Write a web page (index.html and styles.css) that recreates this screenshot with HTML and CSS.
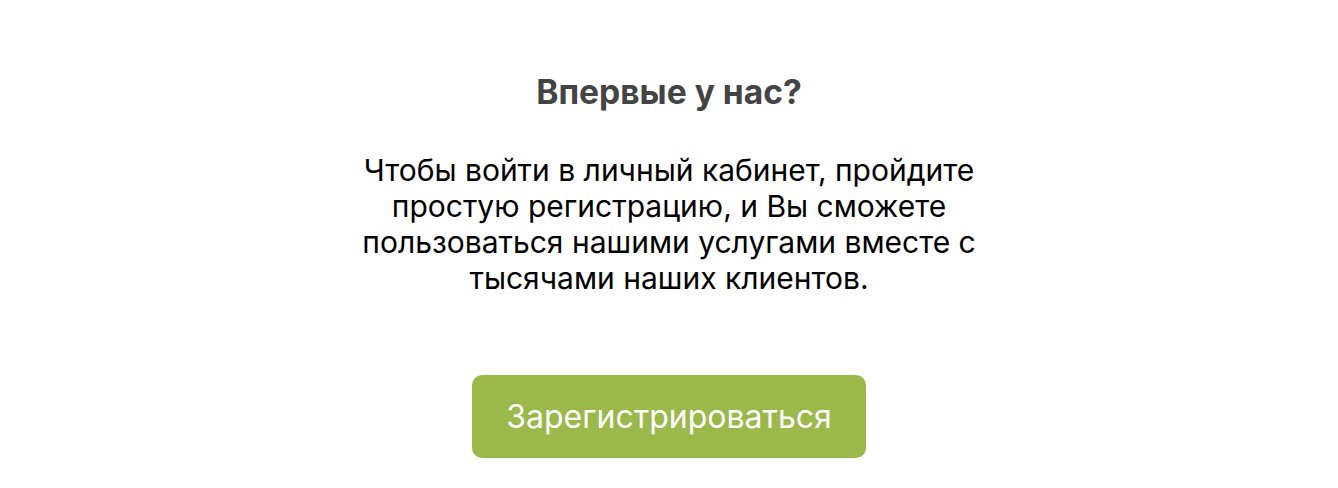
FILE: index.html
```html
<!DOCTYPE html>
<html lang="ru">
<head>
<meta charset="utf-8">
<link rel="stylesheet" href="styles.css">
</head>
<body>
<main class="promo">
  <h2 class="promo-title">Впервые у нас?</h2>
  <p class="promo-text">Чтобы войти в личный кабинет, пройдите простую регистрацию, и Вы сможете пользоваться нашими услугами вместе с тысячами наших клиентов.</p>
  <a class="promo-button" href="#">Зарегистрироваться</a>
</main>
</body>
</html>
```

FILE: styles.css
```css
html, body {
  margin: 0;
  padding: 0;
  background: #ffffff;
}
body {
  font-family: Inter, "Noto Sans", sans-serif;
}
.promo {
  display: flex;
  flex-direction: column;
  align-items: center;
  padding-top: 72px;
}
.promo-title {
  margin: 0;
  font-size: 33.6px;
  line-height: 40px;
  font-weight: 700;
  color: #444444;
}
.promo-text {
  margin: 40px 0 0;
  width: 640px;
  text-align: center;
  font-size: 30px;
  line-height: 36px;
  color: #000000;
}
.promo-button {
  margin-top: 79px;
  width: 394px;
  height: 83px;
  display: flex;
  align-items: center;
  justify-content: center;
  background: #9bb84b;
  border-radius: 10px;
  color: #ffffff;
  font-size: 32px;
  text-decoration: none;
}
```
